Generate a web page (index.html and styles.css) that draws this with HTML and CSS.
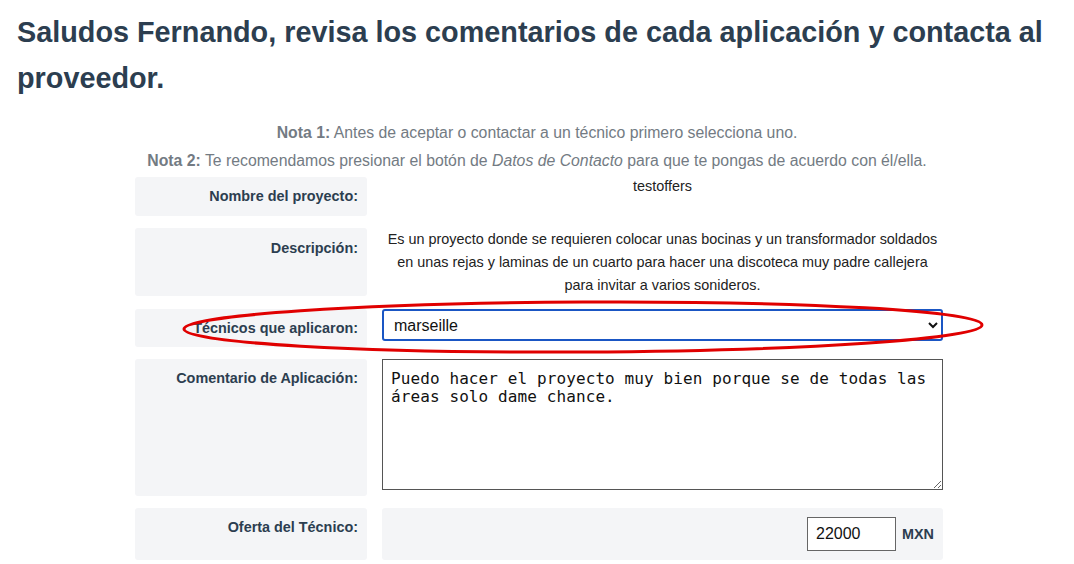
FILE: index.html
```html
<!DOCTYPE html>
<html lang="es">

<head>
    <meta charset="UTF-8">
    <meta name="viewport" content="width=device-width, initial-scale=1.0">
    <title>Aplicaciones del proyecto</title>
    <link rel="stylesheet" href="styles.css">
</head>

<body>
    <h1 class="greeting">Saludos Fernando, revisa los comentarios de cada aplicación y contacta al proveedor.</h1>

    <div class="notes">
        <p><strong>Nota 1:</strong> Antes de aceptar o contactar a un técnico primero selecciona uno.</p>
        <p><strong>Nota 2:</strong> Te recomendamos presionar el botón de <em>Datos de Contacto</em> para que te pongas de acuerdo con él/ella.</p>
    </div>

    <div class="project-form">
        <div class="label row-name">Nombre del proyecto:</div>
        <div class="value value-name">testoffers</div>

        <div class="label row-desc">Descripción:</div>
        <div class="value value-desc">Es un proyecto donde se requieren colocar unas bocinas y un transformador soldados en unas rejas y laminas de un cuarto para hacer una discoteca muy padre callejera para invitar a varios sonideros.</div>

        <div class="label row-tech">Técnicos que aplicaron:</div>
        <div class="value value-tech">
            <select class="tech-select">
                <option>marseille</option>
            </select>
            <!-- marca roja sobre el selector -->
            <svg class="highlight" width="810" height="60" viewBox="0 0 810 60">
                <ellipse cx="402" cy="29" rx="399" ry="25" fill="none" stroke="#e00000" stroke-width="3" transform="rotate(-0.3 402 29)" />
            </svg>
        </div>

        <div class="label row-comment">Comentario de Aplicación:</div>
        <div class="value value-comment">
            <textarea class="comment-box">Puedo hacer el proyecto muy bien porque se de todas las áreas solo dame chance.</textarea>
        </div>

        <div class="label row-offer">Oferta del Técnico:</div>
        <div class="value value-offer">
            <input class="offer-input" type="text" value="22000">
            <span class="currency">MXN</span>
        </div>
    </div>
</body>

</html>
```

FILE: styles.css
```css
body {
    margin: 0;
    font-family: "Liberation Sans", Arial, sans-serif;
    color: #2c3e50;
    background: #fff;
}

.greeting {
    margin: 9px 0 0 17px;
    font-size: 28.8px;
    line-height: 46px;
    font-weight: bold;
    color: #2c3e50;
}

.notes {
    margin-top: 18px;
    text-align: center;
    color: #737b83;
    font-size: 15.8px;
}

.notes p {
    margin: 0;
    line-height: 28px;
}

.project-form {
    display: grid;
    grid-template-columns: 232px 561px;
    column-gap: 15px;
    row-gap: 12px;
    width: 808px;
    margin: 2px 0 0 135px;
}

.label {
    background: #f4f5f7;
    border-radius: 3px;
    text-align: right;
    font-weight: bold;
    font-size: 14.4px;
    line-height: 16px;
    padding: 11px 9px 0 0;
}

.row-name {
    height: 28px;
}

.row-desc {
    height: 56px;
    padding-top: 12px;
}

.row-tech {
    height: 27px;
}

.row-comment {
    height: 126px;
}

.row-offer {
    height: 41px;
}

.value {
    text-align: center;
    font-size: 14.4px;
    color: #222;
}

.value-name {
    padding-top: 1px;
    line-height: 16px;
}

.value-desc {
    line-height: 23px;
}

.value-tech {
    position: relative;
}

.tech-select {
    display: block;
    width: 561px;
    height: 32px;
    border: 2px solid #1a56c4;
    border-radius: 3px;
    background: #fff;
    font-family: "Liberation Sans", Arial, sans-serif;
    font-size: 16px;
    color: #111;
    padding: 0 6px;
}

.highlight {
    position: absolute;
    left: -201px;
    top: -11px;
    pointer-events: none;
}

.comment-box {
    display: block;
    box-sizing: border-box;
    width: 561px;
    height: 131px;
    margin: 0;
    border: 1px solid #555;
    padding: 10px 8px 8px;
    font-family: "DejaVu Sans Mono", monospace;
    font-size: 16px;
    letter-spacing: 0.1px;
    line-height: 18px;
    color: #111;
    text-align: left;
}

.value-offer {
    background: #f4f5f7;
    border-radius: 3px;
    display: flex;
    justify-content: flex-end;
    align-items: center;
    padding-right: 9px;
}

.offer-input {
    box-sizing: border-box;
    width: 89px;
    height: 34px;
    border: 1px solid #666;
    padding: 0 8px;
    font-family: "Liberation Sans", Arial, sans-serif;
    font-size: 16px;
    color: #111;
    margin-right: 6px;
}

.currency {
    font-weight: bold;
    font-size: 14.4px;
    color: #2c3e50;
}
```
